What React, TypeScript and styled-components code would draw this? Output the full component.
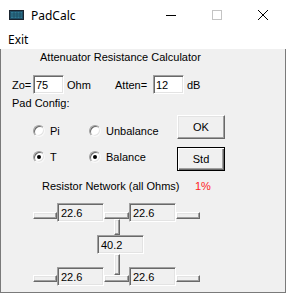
import React from "react";
import styled, { createGlobalStyle, css } from "styled-components";

const GlobalStyle = createGlobalStyle`
  html, body {
    margin: 0;
    padding: 0;
    background: #ffffff;
  }
  * {
    box-sizing: border-box;
  }
`;

// classic win32 look
const raised = css`
  background: #f0f0f0;
  border-style: solid;
  border-width: 1px;
  border-color: #ffffff #696969 #696969 #ffffff;
  box-shadow: inset -1px -1px 0 #a0a0a0, inset 1px 1px 0 #e3e3e3;
`;

const sunken = css`
  border-style: solid;
  border-width: 1px;
  border-color: #a0a0a0 #ffffff #ffffff #a0a0a0;
  box-shadow: inset 1px 1px 0 #696969, inset -1px -1px 0 #e3e3e3;
`;

interface Node {
  kind: "box" | "hbar" | "vbar";
  x: number;
  y: number;
  w: number;
  h: number;
  value?: string;
}

// resistor network diagram, coordinates inside the diagram canvas
const network: Node[] = [
  { kind: "hbar", x: 33, y: 19, w: 24, h: 7 },
  { kind: "box", x: 57, y: 10, w: 47, h: 19, value: "22.6" },
  { kind: "hbar", x: 104, y: 19, w: 25, h: 7 },
  { kind: "box", x: 129, y: 10, w: 47, h: 19, value: "22.6" },
  { kind: "hbar", x: 176, y: 19, w: 24, h: 7 },
  { kind: "vbar", x: 114, y: 26, w: 6, h: 16 },
  { kind: "box", x: 97, y: 42, w: 47, h: 19, value: "40.2" },
  { kind: "vbar", x: 114, y: 61, w: 6, h: 21 },
  { kind: "hbar", x: 33, y: 82, w: 24, h: 7 },
  { kind: "box", x: 57, y: 74, w: 47, h: 19, value: "22.6" },
  { kind: "hbar", x: 104, y: 82, w: 25, h: 7 },
  { kind: "box", x: 129, y: 74, w: 47, h: 19, value: "22.6" },
  { kind: "hbar", x: 176, y: 82, w: 24, h: 7 },
];

const AppIcon = () => (
  <svg width="15" height="10" viewBox="0 0 15 10">
    <rect x="0.5" y="0.5" width="14" height="9" fill="#1f4e66" stroke="#1b2530" />
    <rect x="2" y="2" width="11" height="6" fill="#2f7a94" />
    <path d="M2 4h11M2 6h11M5 2v6M8 2v6M11 2v6" stroke="#1d4a5e" strokeWidth="0.8" />
  </svg>
);

const MinimizeIcon = () => (
  <svg width="10" height="10" viewBox="0 0 10 10">
    <path d="M0 5.5h10" stroke="#000" strokeWidth="1" />
  </svg>
);

const MaximizeIcon = () => (
  <svg width="10" height="10" viewBox="0 0 10 10">
    <rect x="0.5" y="0.5" width="9" height="9" fill="none" stroke="#c4c4c4" />
  </svg>
);

const CloseIcon = () => (
  <svg width="10" height="10" viewBox="0 0 10 10">
    <path d="M0 0L10 10M10 0L0 10" stroke="#000" strokeWidth="1" />
  </svg>
);

const Radio: React.FC<{ checked?: boolean; label: string }> = ({ checked, label }) => (
  <RadioItem>
    <RadioCircle $checked={checked} />
    <span>{label}</span>
  </RadioItem>
);

const App: React.FC = () => {
  return (
    <>
      <GlobalStyle />
      <Window>
        <TitleBar>
          <TitleLeft>
            <AppIcon />
            <TitleText>PadCalc</TitleText>
          </TitleLeft>
          <Controls>
            <ControlButton><MinimizeIcon /></ControlButton>
            <ControlButton><MaximizeIcon /></ControlButton>
            <ControlButton><CloseIcon /></ControlButton>
          </Controls>
        </TitleBar>

        <MenuBar>
          <MenuItem>Exit</MenuItem>
        </MenuBar>

        <Client>
          <Heading>Attenuator Resistance Calculator</Heading>

          <FieldRow>
            <Label $w={21}>Zo=</Label>
            <TextBox>75</TextBox>
            <Label $w={48} $ml={3}>Ohm</Label>
            <Label $w={38}>Atten=</Label>
            <TextBox>12</TextBox>
            <Label $ml={3}>dB</Label>
          </FieldRow>

          <SectionLabel>Pad Config:</SectionLabel>

          <ConfigRow>
            <RadioGrid>
              <Radio label="Pi" />
              <Radio label="Unbalance" />
              <Radio label="T" checked />
              <Radio label="Balance" checked />
            </RadioGrid>
            <ButtonColumn>
              <PushButton>OK</PushButton>
              <PushButton $default>Std</PushButton>
            </ButtonColumn>
          </ConfigRow>

          <NetworkHeader>
            <span>Resistor Network (all Ohms)</span>
            <Percent>1%</Percent>
          </NetworkHeader>

          <Diagram>
            {network.map((n, i) =>
              n.kind === "box" ? (
                <ValueBox key={i} style={{ left: n.x, top: n.y, width: n.w, height: n.h }}>
                  {n.value}
                </ValueBox>
              ) : (
                <Wire key={i} style={{ left: n.x, top: n.y, width: n.w, height: n.h }} />
              )
            )}
          </Diagram>
        </Client>
      </Window>
    </>
  );
};

// Styled Components
const Window = styled.div`
  width: 286px;
  height: 293px;
  display: flex;
  flex-direction: column;
  background: #ffffff;
  overflow: hidden;
`;

const TitleBar = styled.div`
  height: 30px;
  display: flex;
  align-items: center;
  justify-content: space-between;
  background: #ffffff;
`;

const TitleLeft = styled.div`
  display: flex;
  align-items: center;
  padding-left: 9px;
  gap: 7px;
`;

const TitleText = styled.span`
  font-family: "Segoe UI", "Noto Sans", sans-serif;
  font-size: 12px;
  color: #000;
`;

const Controls = styled.div`
  display: flex;
  height: 30px;
`;

const ControlButton = styled.div`
  width: 46px;
  height: 30px;
  display: flex;
  align-items: center;
  justify-content: center;
`;

const MenuBar = styled.div`
  height: 19px;
  display: flex;
  align-items: center;
  background: #ffffff;
`;

const MenuItem = styled.span`
  padding-left: 8px;
  font-family: "Segoe UI", "Noto Sans", sans-serif;
  font-size: 12px;
  color: #000;
`;

const Client = styled.div`
  flex: 1;
  display: flex;
  flex-direction: column;
  background: #f0f0f0;
  border: 1px solid #7a7a7a;
  border-top: none;
  margin-left: 0;
  font-family: "Liberation Sans", Arial, sans-serif;
  font-size: 11px;
  color: #000;
  overflow: hidden;
`;

const Heading = styled.div`
  margin-top: 1px;
  padding-left: 39px;
  line-height: 15px;
`;

const FieldRow = styled.div`
  margin-top: 10px;
  padding-left: 11px;
  display: flex;
  align-items: center;
  height: 19px;
`;

const Label = styled.span<{ $w?: number; $ml?: number }>`
  display: inline-block;
  width: ${({ $w }) => ($w ? `${$w}px` : "auto")};
  margin-left: ${({ $ml }) => ($ml ? `${$ml}px` : "0")};
  white-space: nowrap;
`;

const TextBox = styled.div`
  ${sunken};
  width: 31px;
  height: 19px;
  background: #ffffff;
  padding: 2px 0 0 2px;
  line-height: 14px;
`;

const SectionLabel = styled.div`
  margin-top: 3px;
  padding-left: 11px;
  line-height: 13px;
`;

const ConfigRow = styled.div`
  margin-top: 5px;
  padding-left: 32px;
  display: flex;
  align-items: flex-start;
`;

const RadioGrid = styled.div`
  margin-top: 3px;
  width: 144px;
  display: grid;
  grid-template-columns: 56px auto;
  grid-auto-rows: 26px;
`;

const RadioItem = styled.div`
  display: flex;
  align-items: center;
  gap: 5px;
`;

const RadioCircle = styled.span<{ $checked?: boolean }>`
  position: relative;
  width: 12px;
  height: 12px;
  border-radius: 50%;
  background: #ffffff;
  border: 1px solid;
  border-color: #a0a0a0 #f8f8f8 #f8f8f8 #a0a0a0;
  box-shadow: inset 1px 1px 0 #696969, inset -1px -1px 0 #e3e3e3;
  ${({ $checked }) =>
    $checked &&
    css`
      &::after {
        content: "";
        position: absolute;
        left: 3px;
        top: 3px;
        width: 4px;
        height: 4px;
        border-radius: 50%;
        background: #000;
      }
    `}
`;

const ButtonColumn = styled.div`
  display: flex;
  flex-direction: column;
  gap: 8px;
`;

const PushButton = styled.div<{ $default?: boolean }>`
  ${raised};
  width: 48px;
  height: 24px;
  display: flex;
  align-items: center;
  justify-content: center;
  ${({ $default }) =>
    $default &&
    css`
      border: 1px solid #000;
      box-shadow: inset 1px 1px 0 #ffffff, inset -1px -1px 0 #696969, inset -2px -2px 0 #a0a0a0;
    `}
`;

const NetworkHeader = styled.div`
  margin-top: 9px;
  padding-left: 41px;
  line-height: 13px;
  display: grid;
  grid-template-columns: 153px auto;
`;

const Percent = styled.span`
  color: #ff1a1a;
`;

const Diagram = styled.div`
  position: relative;
  height: 96px;
  margin-left: -1px;
`;

const ValueBox = styled.div`
  position: absolute;
  ${sunken};
  background: #f0f0f0;
  padding: 2px 0 0 3px;
  line-height: 14px;
`;

const Wire = styled.div`
  position: absolute;
  ${raised};
`;

export default App;
